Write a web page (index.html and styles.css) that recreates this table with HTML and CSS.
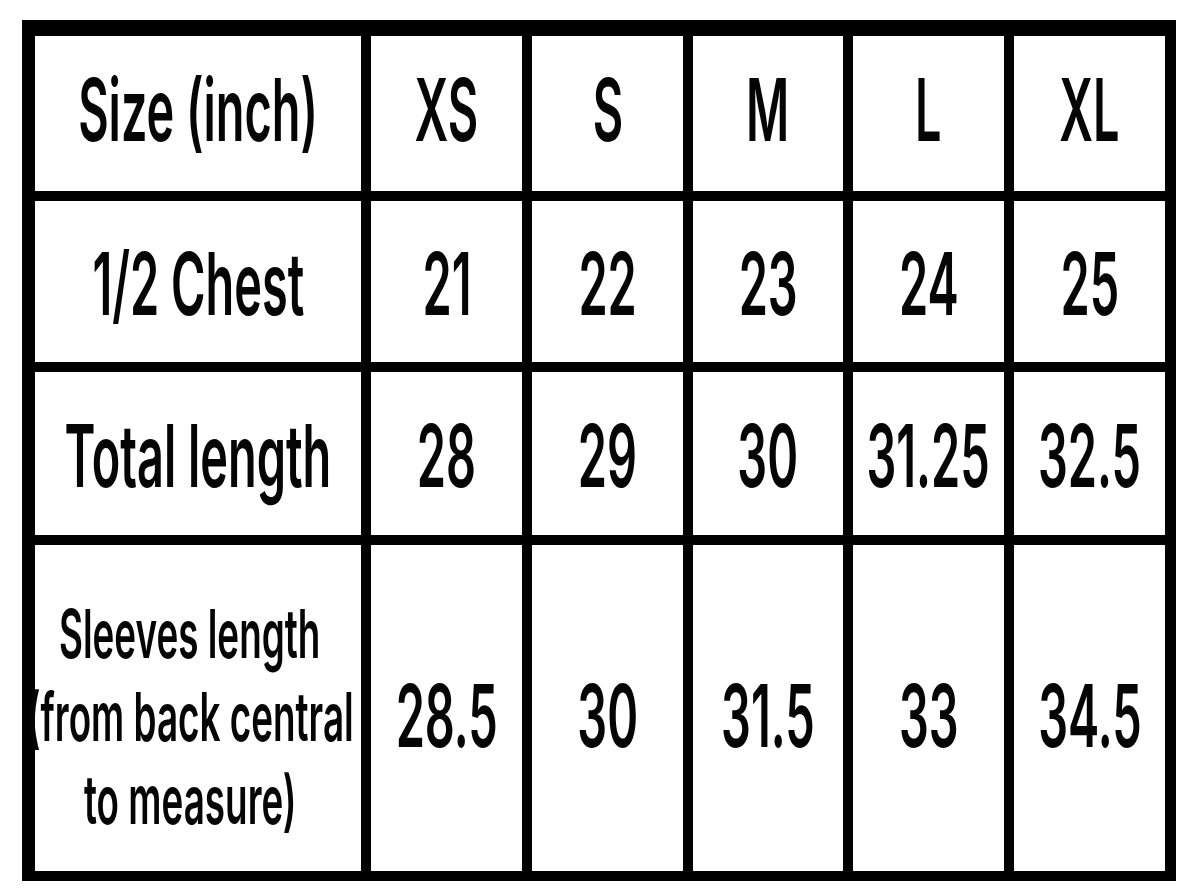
FILE: index.html
```html
<!DOCTYPE html>
<html lang="en">
<head>
<meta charset="utf-8">
<title>Size chart</title>
<link rel="stylesheet" href="styles.css">
</head>
<body>
<div class="chart">
  <div class="cell r1 head"><span class="t">Size (inch)</span></div>
  <div class="cell r1"><span class="t">XS</span></div>
  <div class="cell r1"><span class="t">S</span></div>
  <div class="cell r1"><span class="t">M</span></div>
  <div class="cell r1"><span class="t">L</span></div>
  <div class="cell r1"><span class="t">XL</span></div>

  <div class="cell r2 head"><span class="t">1/2 Chest</span></div>
  <div class="cell r2"><span class="t">21</span></div>
  <div class="cell r2"><span class="t">22</span></div>
  <div class="cell r2"><span class="t">23</span></div>
  <div class="cell r2"><span class="t">24</span></div>
  <div class="cell r2"><span class="t">25</span></div>

  <div class="cell r3 head"><span class="t">Total length</span></div>
  <div class="cell r3"><span class="t">28</span></div>
  <div class="cell r3"><span class="t">29</span></div>
  <div class="cell r3"><span class="t">30</span></div>
  <div class="cell r3"><span class="t">31.25</span></div>
  <div class="cell r3"><span class="t">32.5</span></div>

  <div class="cell r4 head multi">
    <span class="t small">Sleeves length</span>
    <span class="t small">(from back central</span>
    <span class="t small">to measure)</span>
  </div>
  <div class="cell r4"><span class="t">28.5</span></div>
  <div class="cell r4"><span class="t">30</span></div>
  <div class="cell r4"><span class="t">31.5</span></div>
  <div class="cell r4"><span class="t">33</span></div>
  <div class="cell r4"><span class="t">34.5</span></div>
</div>
</body>
</html>
```

FILE: styles.css
```css
html, body {
  margin: 0;
  padding: 0;
  background: #ffffff;
}

.chart {
  margin: 20px 0 0 22px;
  width: 1154px;
  box-sizing: border-box;
  display: grid;
  grid-template-columns: 326px 151px 151px 150px 151px 151px;
  grid-template-rows: 155px 161px 163px 326px;
  gap: 10px;
  padding: 16px 11px 10px 13px;
  background: #000000;
}

.cell {
  background: #ffffff;
  display: flex;
  align-items: center;
  justify-content: center;
  box-sizing: border-box;
  font-family: Inter, "Liberation Sans", sans-serif;
  font-weight: 600;
  color: #050505;
  font-size: 86px;
  line-height: 1;
  white-space: nowrap;
}

.r1 { padding-bottom: 7px; }
.r2 { padding-top: 5px; }
.r3 { padding-top: 5px; }
.r4 { padding-top: 16px; }

.t {
  display: inline-block;
  transform: scaleX(0.545);
}

.multi {
  flex-direction: column;
  padding-right: 16px;
}

.t.small {
  font-size: 67px;
  line-height: 83px;
  transform: scaleX(0.55);
}
```
